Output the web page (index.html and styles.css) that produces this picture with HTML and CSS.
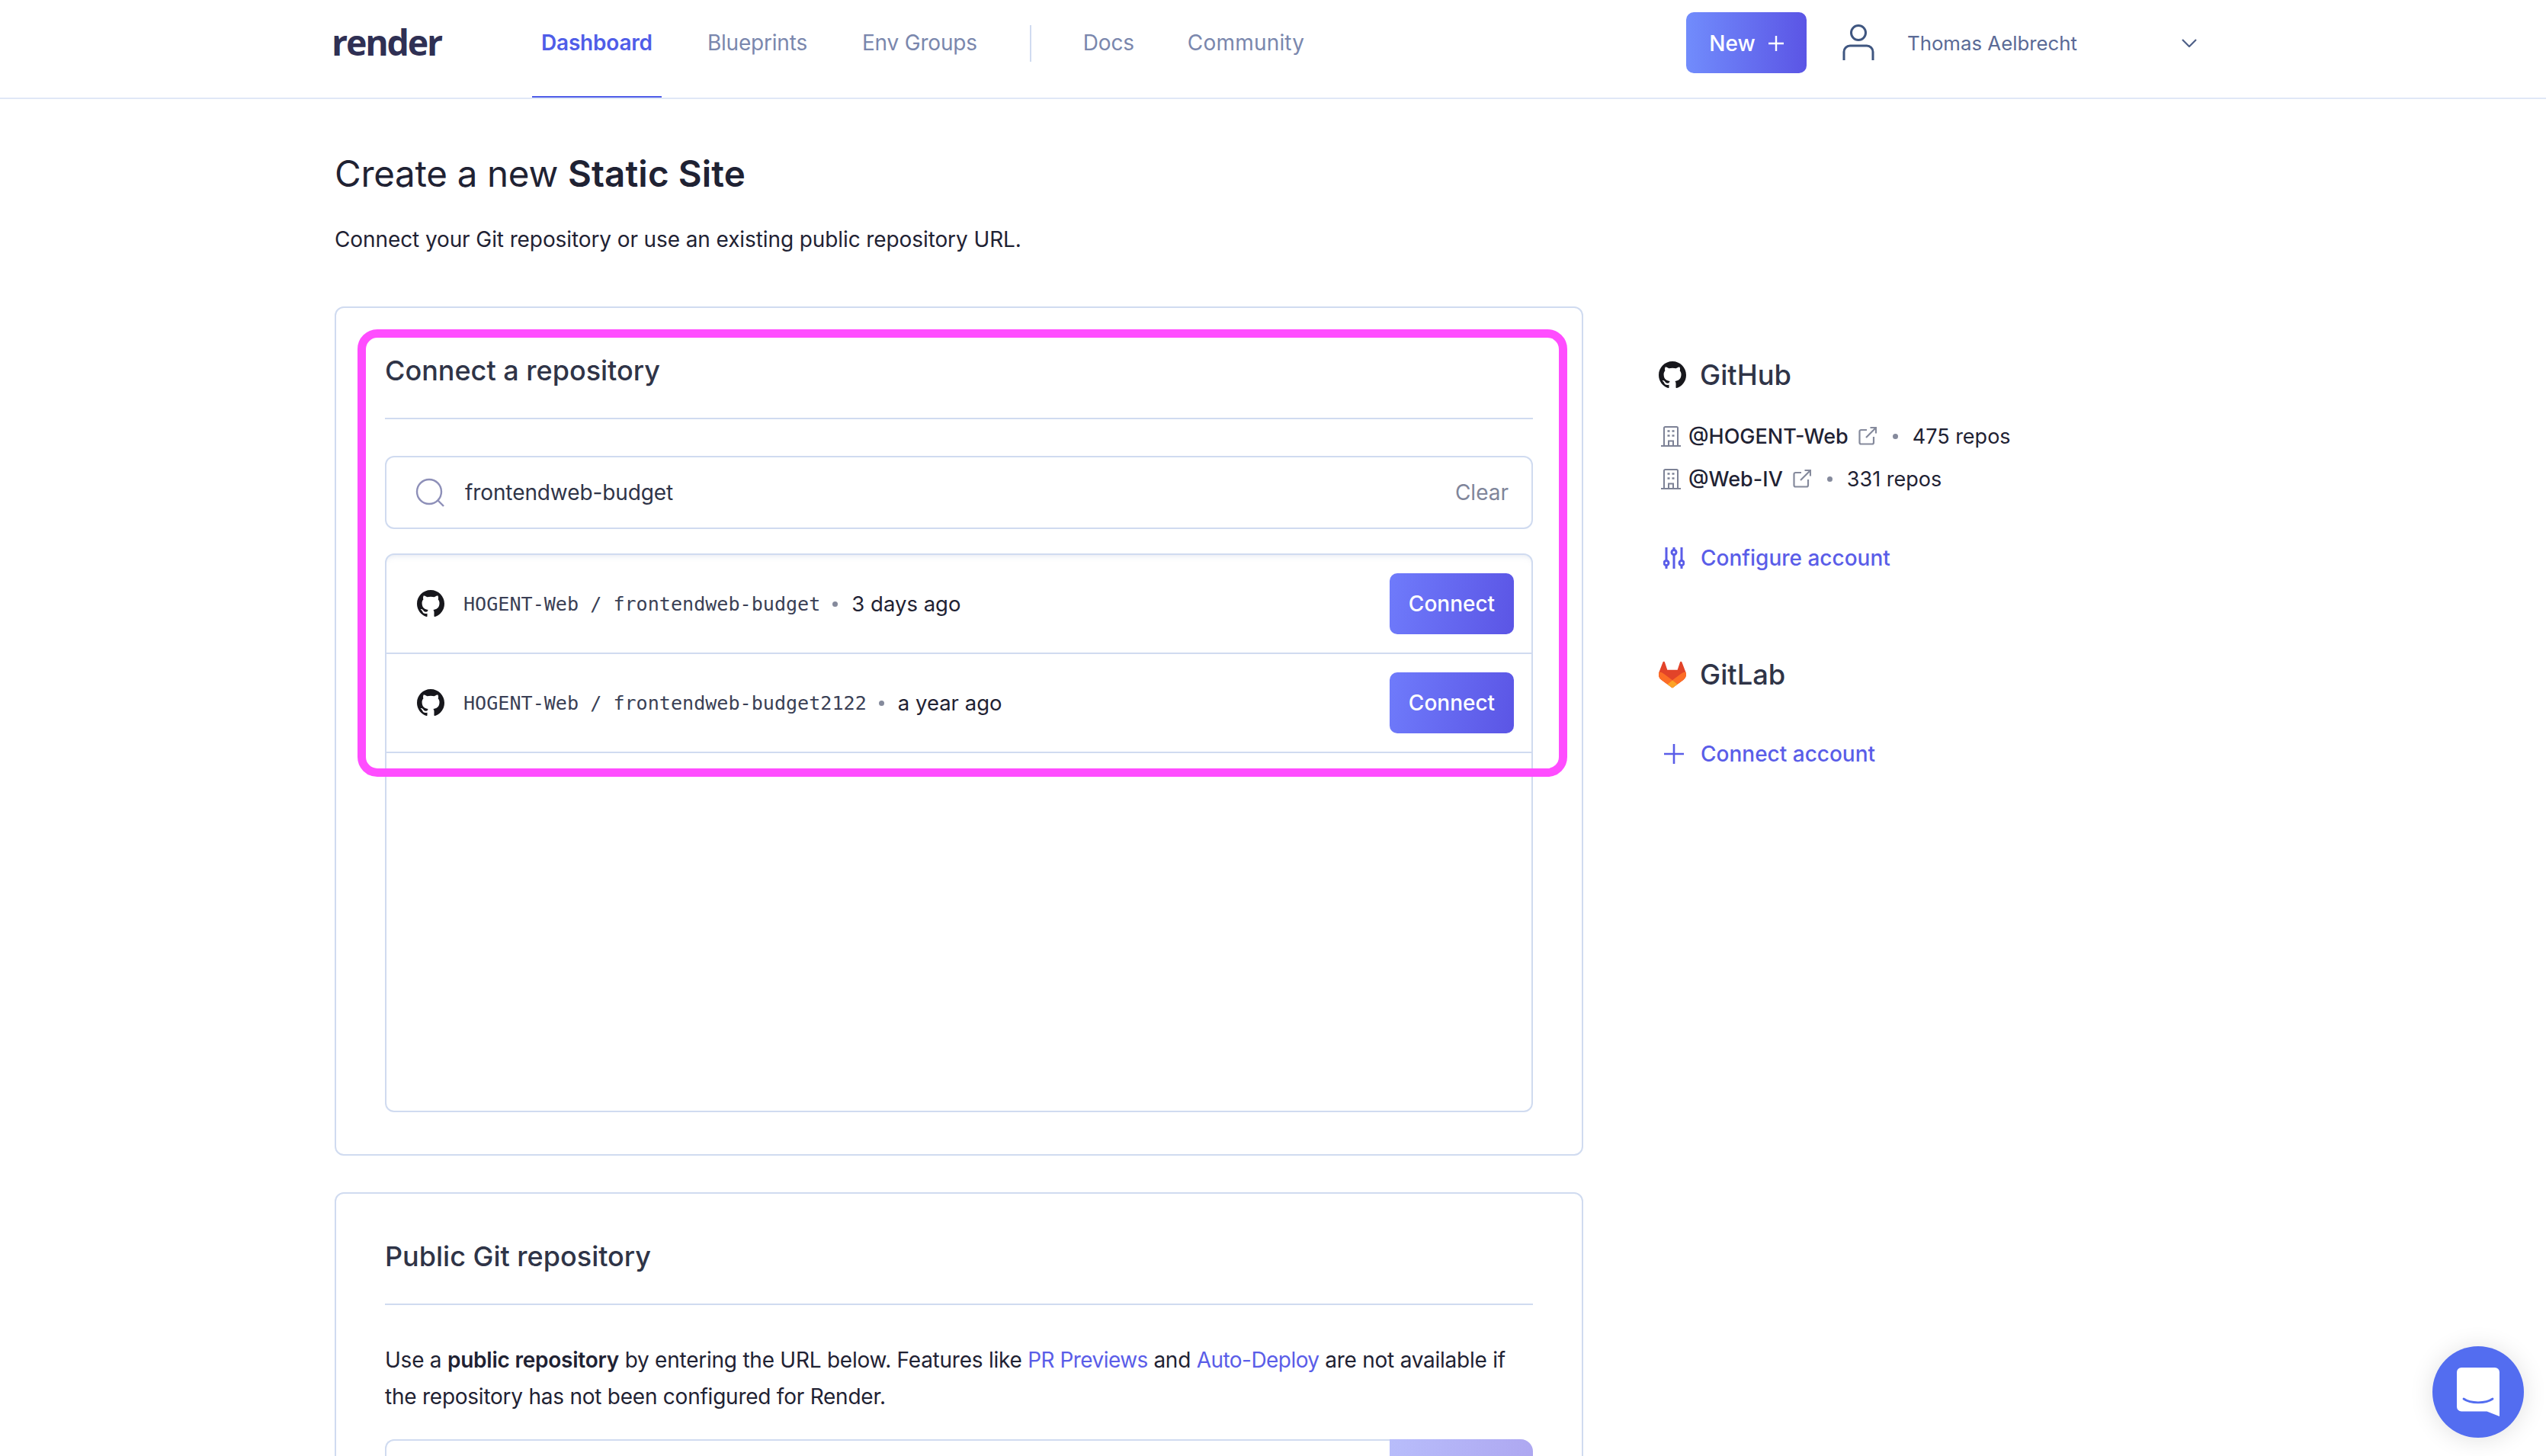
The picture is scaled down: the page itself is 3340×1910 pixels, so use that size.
FILE: index.html
```html
<!DOCTYPE html>
<html lang="en">
<head>
<meta charset="utf-8">
<title>Create a new Static Site</title>
<link rel="stylesheet" href="styles.css">
</head>
<body>
<svg class="defs" width="0" height="0" aria-hidden="true">
  <symbol id="gh" viewBox="0 0 16 16"><path d="M8 0C3.58 0 0 3.58 0 8c0 3.54 2.29 6.53 5.47 7.59.4.07.55-.17.55-.38 0-.19-.01-.82-.01-1.49-2.01.37-2.53-.49-2.69-.94-.09-.23-.48-.94-.82-1.13-.28-.15-.68-.52-.01-.53.63-.01 1.08.58 1.23.82.72 1.21 1.87.87 2.33.66.07-.52.28-.87.51-1.07-1.78-.2-3.64-.89-3.64-3.95 0-.87.31-1.59.82-2.15-.08-.2-.36-1.02.08-2.12 0 0 .67-.21 2.2.82.64-.18 1.32-.27 2-.27.68 0 1.36.09 2 .27 1.53-1.04 2.2-.82 2.2-.82.44 1.1.16 1.92.08 2.12.51.56.82 1.27.82 2.15 0 3.07-1.87 3.75-3.65 3.95.29.25.54.73.54 1.48 0 1.07-.01 1.93-.01 2.2 0 .21.15.46.55.38A8.013 8.013 0 0016 8c0-4.42-3.58-8-8-8z" fill="#17171c"/></symbol>
  <symbol id="org" viewBox="0 0 26 27"><path d="M4 26V2.500A1.500 1.500 0 0 1 5.500 1h15A1.500 1.500 0 0 1 22 2.500V26M0 26h26M10 26v-6.500h6V26" fill="none" stroke="#7d8296" stroke-width="2"/><path d="M8.500 6.500h3M14.500 6.500h3M8.500 12.500h3M14.500 12.500h3" stroke="#7d8296" stroke-width="2.500" fill="none"/></symbol>
  <symbol id="ext" viewBox="0 0 24 24"><path d="M11 4H3.500A2 2 0 0 0 1.500 6v14.500a2 2 0 0 0 2 2H18a2 2 0 0 0 2-2V13M10 14 23 1M15.500 1H23v7.500" fill="none" stroke="#858a9c" stroke-width="2.200"/></symbol>
</svg>

<header class="topbar">
  <div class="logo">render</div>
  <nav class="tabs">
    <a class="tab tab-active">Dashboard</a>
    <a class="tab">Blueprints</a>
    <a class="tab">Env Groups</a>
    <span class="tab-divider"></span>
    <a class="tab tab-docs">Docs</a>
    <a class="tab tab-community">Community</a>
  </nav>
  <button class="btn-new">New
    <svg class="new-plus" viewBox="0 0 20 20"><path d="M10 0v20M0 10h20" stroke="#fff" stroke-width="2.400"/></svg>
  </button>
  <div class="account">
    <svg class="person" viewBox="0 0 42 48"><circle cx="21" cy="11" r="9.500" fill="none" stroke="#3f5680" stroke-width="3"/><path d="M2 47V36a8 8 0 0 1 8-8h22a8 8 0 0 1 8 8v11" fill="none" stroke="#3f5680" stroke-width="3"/></svg>
    <span class="account-name">Thomas Aelbrecht</span>
    <svg class="chevron" viewBox="0 0 20 11"><path d="M1 1l9 9 9-9" fill="none" stroke="#4f6088" stroke-width="2.200"/></svg>
  </div>
</header>

<div class="page">
  <main class="main-col">
    <h1 class="page-title">Create a new <strong>Static Site</strong></h1>
    <p class="page-sub">Connect your Git repository or use an existing public repository URL.</p>

    <section class="card card-connect">
      <h2 class="card-title">Connect a repository</h2>
      <div class="search">
        <svg class="search-icon" viewBox="0 0 38 38"><circle cx="18" cy="18" r="16" fill="none" stroke="#8d8fb8" stroke-width="2.400"/><path d="M29 29l8 8" stroke="#8d8fb8" stroke-width="2.400"/></svg>
        <span class="search-text">frontendweb-budget</span>
        <span class="search-clear">Clear</span>
      </div>
      <div class="repo-list">
        <div class="repo-row">
          <svg class="repo-gh"><use href="#gh"/></svg>
          <span class="repo-name">HOGENT-Web / frontendweb-budget</span>
          <span class="dot"></span>
          <span class="repo-age">3 days ago</span>
          <button class="btn-connect">Connect</button>
        </div>
        <div class="repo-row">
          <svg class="repo-gh"><use href="#gh"/></svg>
          <span class="repo-name">HOGENT-Web / frontendweb-budget2122</span>
          <span class="dot"></span>
          <span class="repo-age">a year ago</span>
          <button class="btn-connect">Connect</button>
        </div>
      </div>
      <div class="highlight"></div>
    </section>

    <section class="card card-public">
      <h2 class="card-title">Public Git repository</h2>
      <p class="public-text">Use a <strong>public repository</strong> by entering the URL below. Features like <a class="link">PR Previews</a> and <a class="link">Auto-Deploy</a> are not available if the repository has not been configured for Render.</p>
      <div class="url-row">
        <div class="url-input"></div>
        <div class="url-btn"></div>
      </div>
    </section>
  </main>

  <aside class="side">
    <div class="provider-head">
      <svg class="provider-icon"><use href="#gh"/></svg>
      <span>GitHub</span>
    </div>
    <div class="org-list">
      <div class="org">
        <svg class="org-icon"><use href="#org"/></svg>
        <span class="org-name">@HOGENT-Web</span>
        <svg class="ext-icon"><use href="#ext"/></svg>
        <span class="dot org-dot"></span>
        <span class="org-count">475 repos</span>
      </div>
      <div class="org">
        <svg class="org-icon"><use href="#org"/></svg>
        <span class="org-name">@Web-IV</span>
        <svg class="ext-icon"><use href="#ext"/></svg>
        <span class="dot org-dot"></span>
        <span class="org-count">331 repos</span>
      </div>
    </div>
    <a class="side-link side-link-config">
      <svg class="side-link-icon" viewBox="0 0 28 28"><g fill="none" stroke="#5a5de8" stroke-width="3"><path d="M4 0v17M4 24v4M14 0v3M14 10v18M24 0v17M24 24v4"/><circle cx="4" cy="20.500" r="3"/><circle cx="14" cy="6.500" r="3"/><circle cx="24" cy="20.500" r="3"/></g></svg>
      Configure account
    </a>
    <div class="provider-head provider-gitlab">
      <svg class="provider-icon" viewBox="0 0 25 24"><path d="M24.507 9.500l-.034-.090L21.082.562a.896.896 0 00-1.694.091l-2.290 7.010H7.825L5.535.653a.898.898 0 00-1.694-.090L.451 9.411.416 9.500a6.297 6.297 0 002.090 7.278l.012.010.030.022 5.160 3.867 2.560 1.935 1.554 1.176a1.051 1.051 0 001.268 0l1.555-1.176 2.560-1.935 5.197-3.890.014-.010A6.297 6.297 0 0024.507 9.500z" fill="#E24329"/><path d="M24.507 9.500l-.034-.090a11.440 11.440 0 00-4.560 2.051l-7.447 5.632 4.742 3.584 5.197-3.890.014-.010A6.297 6.297 0 0024.507 9.500z" fill="#FC6D26"/><path d="M7.707 20.677l2.560 1.935 1.555 1.176a1.051 1.051 0 001.268 0l1.555-1.176 2.560-1.935-4.743-3.584-4.755 3.584z" fill="#FCA326"/><path d="M5.010 11.461a11.430 11.430 0 00-4.560-2.050L.416 9.500a6.297 6.297 0 002.090 7.278l.012.010.030.022 5.160 3.867 4.745-3.584-7.444-5.632z" fill="#FC6D26"/></svg>
      <span>GitLab</span>
    </div>
    <a class="side-link side-link-connect">
      <svg class="side-link-icon" viewBox="0 0 28 28"><path d="M14 1v26M1 14h26" stroke="#5a5de8" stroke-width="2.600" fill="none"/></svg>
      Connect account
    </a>
  </aside>
</div>

<button class="chat" aria-label="Chat">
  <svg class="chat-icon" viewBox="0 0 56 64"><path d="M6 0h44a6 6 0 0 1 6 6v58L39.500 57.500H6a6 6 0 0 1-6-6V6a6 6 0 0 1 6-6z" fill="#fff"/><path d="M9 41c9 6.500 29 6.500 38 0" fill="none" stroke="#536df0" stroke-width="2.800" stroke-linecap="round"/></svg>
</button>
</body>
</html>
```

FILE: styles.css
```css
* { box-sizing: border-box; }
html, body { height: 1910px; overflow: hidden; }
body {
  margin: 0;
  background: #fff;
  color: #1f2233;
  font-family: Inter, "Liberation Sans", sans-serif;
  font-size: 28px;
}
.defs { position: absolute; }
button { font-family: inherit; border: 0; cursor: pointer; }

.topbar {
  display: flex;
  align-items: center;
  height: 130px;
  padding: 0 458px 16px 435px;
  border-bottom: 2px solid #e0e8f7;
}
.logo {
  width: 263px;
  font-family: "Open Sans", Inter, sans-serif;
  font-size: 46.500px;
  font-weight: 700;
  letter-spacing: -2.200px;
  color: #2f3054;
  margin-bottom: 2px;
}
.tabs {
  display: flex;
  align-items: center;
  align-self: flex-start;
  height: 128px;
  gap: 48px;
}
.tab {
  display: flex;
  align-items: center;
  align-self: stretch;
  padding: 0 12px 16px;
  color: #7a87ad;
  font-size: 28px;
  letter-spacing: -0.2px;
}
.tab-active {
  color: #4f5de8;
  font-weight: 600;
  border-bottom: 2px solid #4f5de8;
  padding-bottom: 14px;
}
.tab-docs { margin-right: -2px; }
.tab-community { letter-spacing: 0.2px; }
.tab-divider {
  width: 2px;
  height: 48px;
  margin: 0 8px 14px 9px;
  background: #d0dbf0;
}
.btn-new {
  display: flex;
  align-items: center;
  gap: 17px;
  justify-content: center;
  width: 158px;
  height: 80px;
  margin-left: auto;
  padding-top: 2px;
  border-radius: 10px;
  background: linear-gradient(90deg, #718cfc, #5b55e5);
  color: #fff;
  font-size: 28px;
  font-weight: 500;
}
.new-plus { width: 20px; height: 20px; }
.account {
  display: flex;
  align-items: center;
  width: 465px;
  margin-left: 47px;
}
.person { width: 42px; height: 48px; }
.account-name {
  margin-left: 43px;
  color: #5a6a96;
  font-size: 25.800px;
}
.chevron { width: 20px; height: 11px; margin-left: auto; }

.page {
  display: flex;
  gap: 100px;
  padding-left: 439px;
}
.main-col { width: 1638px; flex: none; }
.page-title {
  margin: 70px 0 0;
  font-size: 47.500px;
  line-height: 56px;
  font-weight: 400;
  letter-spacing: -0.300px;
}
.page-title strong { font-weight: 600; letter-spacing: 0.100px; }
.page-sub {
  margin: 38px 0 0;
  font-size: 28px;
  line-height: 40px;
  letter-spacing: -0.1px;
}
.card {
  position: relative;
  border: 2px solid #d0dbf0;
  border-radius: 12px;
  padding: 52px 64px 0;
  background: #fff;
}
.card-connect { margin-top: 68px; height: 1114px; }
.card-public { margin-top: 48px; height: 600px; }
.card-title {
  margin: 0;
  padding-bottom: 32px;
  border-bottom: 2px solid #d0dbf0;
  font-size: 36px;
  line-height: 60px;
  font-weight: 500;
  color: #2f3447;
}
.search {
  display: flex;
  align-items: center;
  height: 96px;
  margin-top: 48px;
  padding: 0 30px 0 38px;
  border: 2px solid #d0dbf0;
  border-radius: 12px;
}
.search-icon { width: 38px; height: 38px; }
.search-text { margin-left: 27px; font-size: 28px; letter-spacing: -0.1px; color: #2f3447; }
.search-clear { margin-left: auto; color: #80859a; font-size: 28px; }
.repo-list {
  height: 733px;
  margin-top: 32px;
  border: 2px solid #d0dbf0;
  border-radius: 12px;
  box-shadow: inset 0 8px 8px -8px rgba(120, 140, 180, .25);
}
.repo-row {
  display: flex;
  align-items: center;
  height: 130px;
  padding: 0 23px 0 40px;
  border-bottom: 2px solid #d0dbf0;
}
.repo-gh { width: 36px; height: 36px; }
.repo-name {
  margin-left: 25px;
  font-family: "DejaVu Sans Mono", "Liberation Mono", monospace;
  font-size: 25.100px;
  color: #3a3f55;
}
.dot {
  width: 7px;
  height: 7px;
  border-radius: 50%;
  background: #858a9c;
  margin: 0 18px 0 16px;
}
.repo-age { font-size: 27.500px; }
.btn-connect {
  width: 163px;
  height: 80px;
  margin-left: auto;
  border-radius: 10px;
  background: linear-gradient(100deg, #6f7bfb, #5b55e5);
  color: #fff;
  font-size: 28px;
  font-weight: 500;
}
.highlight {
  position: absolute;
  left: 28px;
  top: 28px;
  width: 1587px;
  height: 587px;
  border: 11px solid #ff4dff;
  border-radius: 26px;
  pointer-events: none;
}
.public-text {
  margin: 48px 0 0;
  font-size: 28px;
  line-height: 48px;
  letter-spacing: -0.240px;
}
.public-text strong { font-weight: 600; }
.link { color: #5a5de8; letter-spacing: -0.55px; }
.url-row { display: flex; height: 94px; margin-top: 32px; }
.url-input {
  flex: 1;
  border: 2px solid #d0dbf0;
  border-right: 0;
  border-radius: 12px 0 0 12px;
}
.url-btn {
  width: 188px;
  border-radius: 0 16px 16px 0;
  background: linear-gradient(100deg, #b8bdfb, #ada6f0);
}

.side { flex: none; padding-top: 4px; }
.provider-head {
  display: flex;
  align-items: center;
  gap: 18px;
  margin-left: -1px;
  margin-top: 336px;
  height: 44px;
  font-size: 36.300px;
  font-weight: 500;
  color: #2f3447;
}
.provider-gitlab { margin-top: 114px; }
.provider-icon { width: 36px; height: 36px; }
.org-list { margin-top: 30px; }
.org { display: flex; align-items: center; height: 56px; }
.org-icon { width: 26px; height: 27px; margin-left: 2px; }
.org-name { margin-left: 10px; font-weight: 500; font-size: 27px; }
.ext-icon { width: 24px; height: 24px; margin-left: 13px; }
.org-dot { margin: 0 19px 0 21px; }
.org-count { font-size: 27px; }
.side-link {
  display: flex;
  align-items: center;
  gap: 21px;
  color: #5a5de8;
  font-size: 28px;
  font-weight: 500;
}
.side-link-config { margin-top: 59px; }
.side-link-connect { margin-top: 65px; }
.side-link-icon { width: 28px; height: 28px; margin-left: 5px; }

.chat {
  position: fixed;
  left: 3191px;
  top: 1766px;
  width: 120px;
  height: 120px;
  padding: 0;
  border-radius: 50%;
  background: #536df0;
  box-shadow: 0 2px 32px rgba(0, 0, 0, .12);
  display: flex;
  align-items: center;
  justify-content: center;
}
.chat-icon { width: 56px; height: 64px; }
```
